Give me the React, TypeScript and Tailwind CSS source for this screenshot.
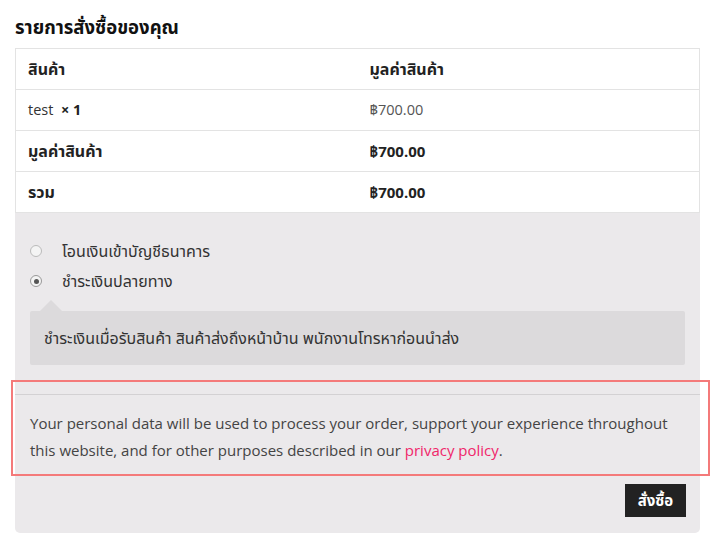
import React from "react";

export default function App() {
  const font = { fontFamily: '"Open Sans", "Noto Sans", "Noto Sans Thai", Tahoma, sans-serif' };
  return (
    <div className="w-[725px] h-[546px] bg-white relative overflow-hidden" style={font}>
      <div className="pl-[15px] pr-[25px]">
        <h3 className="h-[48px] pt-[15px] text-[18.5px] leading-[24px] font-bold text-[#111]">รายการสั่งซื้อของคุณ</h3>
        <div className="bg-[#ebe9eb] rounded-b-[5px] w-[685px]">
          <table className="w-full bg-white border border-[#e3e3e3] border-collapse text-[14px] text-[#333]">
            <tbody>
              <tr className="h-[41px] border-b border-[#e3e3e3]">
                <td className="pl-[12px] font-bold text-[#222] w-[354px] text-[16px]">สินค้า</td>
                <td className="font-bold text-[#222] text-[16px]">มูลค่าสินค้า</td>
              </tr>
              <tr className="h-[41px] border-b border-[#e3e3e3]">
                <td className="pl-[12px] text-[14.5px]">test&nbsp; <strong className="text-[#222]">× 1</strong></td>
                <td className="text-[#555] text-[14.5px]">฿700.00</td>
              </tr>
              <tr className="h-[41px] border-b border-[#e3e3e3]">
                <td className="pl-[12px] font-bold text-[#222] text-[16px]">มูลค่าสินค้า</td>
                <td className="font-bold text-[#222] text-[15px]">฿700.00</td>
              </tr>
              <tr className="h-[41px]">
                <td className="pl-[12px] font-bold text-[#222] text-[16px]">รวม</td>
                <td className="font-bold text-[#222] text-[15px]">฿700.00</td>
              </tr>
            </tbody>
          </table>
          <div className="pt-[23px] px-[15px] text-[16px] text-[#333]">
            <div className="flex items-center h-[30px]">
              <span className="w-[12px] h-[12px] rounded-full border border-[#bbb] bg-[#f4f4f4] mr-[20px]"></span>
              <span>โอนเงินเข้าบัญชีธนาคาร</span>
            </div>
            <div className="flex items-center h-[30px]">
              <span className="w-[12px] h-[12px] rounded-full border border-[#999] bg-[#f4f4f4] mr-[20px] flex items-center justify-center">
                <span className="w-[5px] h-[5px] rounded-full bg-[#555]"></span>
              </span>
              <span>ชำระเงินปลายทาง</span>
            </div>
            <div className="relative mt-[15px] bg-[#dcdadc] rounded-[2px] h-[54px] flex items-center pl-[14px]">
              <span className="absolute -top-[11px] left-[10px] w-0 h-0 border-l-[11px] border-r-[11px] border-b-[11px] border-l-transparent border-r-transparent border-b-[#dcdadc]"></span>
              <span>ชำระเงินเมื่อรับสินค้า สินค้าส่งถึงหน้าบ้าน พนักงานโทรหาก่อนนำส่ง</span>
            </div>
          </div>
          <div className="mt-[29px] border-t border-[#d3d1d3] pt-[15px] px-[15px] text-[15px] leading-[27px] text-[#444]">
            <p>
              Your personal data will be used to process your order, support your experience throughout this website, and for other purposes described in our{" "}
              <a className="text-[#f0266a]">privacy policy</a>.
            </p>
          </div>
          <div className="flex justify-end px-[14px] pt-[20px] pb-[16px]">
            <button className="bg-[#222] text-white font-bold text-[15px] w-[61px] h-[33px]">สั่งซื้อ</button>
          </div>
        </div>
      </div>
      <div className="absolute left-[11px] top-[380px] w-[699px] h-[96px] border-2 border-[#f47a7a] pointer-events-none"></div>
    </div>
  );
}
